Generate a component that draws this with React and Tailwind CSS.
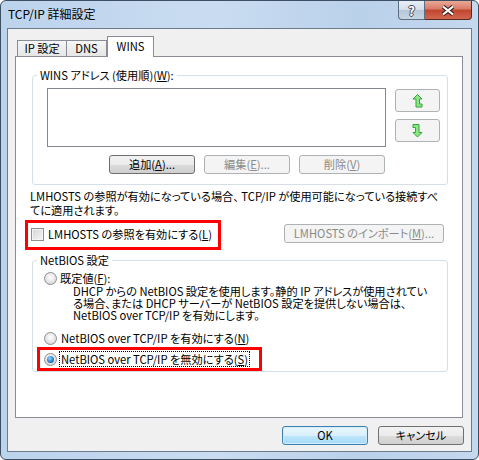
function Btn({ children, disabled, primary, className = "" }) {
  let look =
    "border-[#707070] bg-[linear-gradient(#f2f2f2,#ebebeb_50%,#dddddd_50%,#cfcfcf)] text-black";
  if (disabled) look = "border-[#adb2b5] bg-[#f4f4f4] text-[#8a8a8a]";
  if (primary)
    look =
      "border-[#3c7fb1] bg-[linear-gradient(#eaf6fd,#d9f0fc_50%,#bee6fd_50%,#a7d9f5)] text-black shadow-[inset_0_0_0_1px_#d2eefd]";
  return (
    <div
      className={`flex items-center justify-center h-[19px] border rounded-[3px] leading-none ${look} ${className}`}
    >
      {children}
    </div>
  );
}

function Radio({ checked }) {
  return (
    <span className="w-[13px] h-[13px] shrink-0 rounded-full border border-[#8e8f8f] bg-[radial-gradient(circle_at_50%_40%,#ffffff,#e2e2e2_60%,#c8c8c8)] flex items-center justify-center">
      {checked && (
        <span className="w-[7px] h-[7px] rounded-full bg-[radial-gradient(circle_at_40%_35%,#9ad6ff,#2a7fcc_55%,#0c427f)]" />
      )}
    </span>
  );
}

function ArrowUp() {
  return (
    <svg width="11" height="14" viewBox="0 0 11 14">
      <path
        d="M5.5 0.5 L10 5 L7.5 5 L7.5 10 L10 10 L10 13 L4 13 L4 5 L1 5 Z"
        fill="#8be886"
        stroke="#38a23e"
        strokeWidth="1"
        strokeLinejoin="miter"
      />
    </svg>
  );
}

function ArrowDown() {
  return (
    <svg width="11" height="14" viewBox="0 0 11 14">
      <path
        d="M1 0.5 L7 0.5 L7 8.5 L10 8.5 L5.5 13 L1 8.5 L3.5 8.5 L3.5 3.5 L1 3.5 Z"
        fill="#8be886"
        stroke="#38a23e"
        strokeWidth="1"
      />
    </svg>
  );
}

function App() {
  return (
    <div className="w-[479px] h-[460px] font-['Noto_Sans_CJK_JP',sans-serif] text-[11.2px] [font-feature-settings:'palt'] text-black">
      <div className="w-full h-full flex flex-col border border-[#3e4f63] rounded-[6px] bg-[linear-gradient(to_right,#bcd3ec,#c9dcf1_45%,#bad1ea_75%,#c4d8ee)] overflow-hidden">
        {/* title bar */}
        <div className="h-[27px] flex justify-between shrink-0">
          <div className="pl-[7px] pt-[5px] leading-[16px] text-[12px]">TCP/IP 詳細設定</div>
          <div className="flex pr-[6px] h-[19px]">
            <div className="w-[27px] h-full flex items-center justify-center border border-t-0 border-[#5d6d80] rounded-bl-[4px] bg-[linear-gradient(#e8eef6,#d3deea_50%,#b7c7d9_50%,#c7d5e4)]">
              <span className="text-white font-bold text-[13px] leading-none [text-shadow:1px_0_0_#3b4756,-1px_0_0_#3b4756,0_1px_0_#3b4756,0_-1px_0_#3b4756]">
                ?
              </span>
            </div>
            <div className="w-[47px] h-full flex items-center justify-center border border-t-0 border-l-0 border-[#5a2a22] rounded-br-[4px] bg-[linear-gradient(#e8a897,#d77b65_45%,#c2452e_50%,#d06650)]">
              <svg width="14" height="11" viewBox="0 0 14 11">
                <path d="M2 1.5 L12 9.5 M12 1.5 L2 9.5" stroke="#3b2521" strokeWidth="4.2" />
                <path d="M2 1.5 L12 9.5 M12 1.5 L2 9.5" stroke="#ffffff" strokeWidth="2.2" />
              </svg>
            </div>
          </div>
        </div>

        {/* client area */}
        <div className="flex-1 mx-[6px] mb-[7px] border border-[#6c7c8e] bg-[#f0f0f0] pl-[7px] pt-[7px]">
          {/* tabs */}
          <div className="flex items-end h-[20px] pl-[2px]">
            <div className="w-[50px] h-[16px] border border-b-0 border-[#898c95] bg-[linear-gradient(#f5f5f5,#e6e6e6)] flex items-center justify-center leading-none">
              IP 設定
            </div>
            <div className="w-[41px] h-[16px] -ml-px border border-b-0 border-[#898c95] bg-[linear-gradient(#f5f5f5,#e6e6e6)] flex items-center justify-center leading-none">
              DNS
            </div>
            <div className="relative z-10 w-[47px] h-[21px] -mb-px border border-b-0 border-[#898c95] bg-white flex items-center justify-center leading-none pb-[1px]">
              WINS
            </div>
          </div>

          {/* tab panel */}
          <div className="w-[448px] h-[362px] border border-[#898c95] bg-white">
            <fieldset className="ml-[16px] mt-[10px] w-[416px] border border-[#d5dfe5] rounded-[3px] pb-[10px]">
              <legend className="ml-[4px] px-[3px] leading-[16px]">
                WINS アドレス (使用順)(<u>W</u>):
              </legend>
              <div className="flex mt-[5px] ml-[14px]">
                <div className="w-[339px] h-[59px] border border-[#828790] bg-white" />
                <div className="ml-[9px] mt-[1px] flex flex-col gap-[7px]">
                  <div className="w-[45px] h-[23px] border border-[#adb2b5] rounded-[3px] bg-[#f4f4f4] flex items-center justify-center">
                    <ArrowUp />
                  </div>
                  <div className="w-[45px] h-[23px] border border-[#adb2b5] rounded-[3px] bg-[#f4f4f4] flex items-center justify-center">
                    <ArrowDown />
                  </div>
                </div>
              </div>
              <div className="flex mt-[8px] ml-[76px] gap-[9px]">
                <Btn className="w-[86px]">
                  追加(<u>A</u>)...
                </Btn>
                <Btn disabled className="w-[86px]">
                  編集(<u>E</u>)...
                </Btn>
                <Btn disabled className="w-[86px]">
                  削除(<u>V</u>)
                </Btn>
              </div>
            </fieldset>

            <p className="ml-[14px] mt-[4px] leading-[14px] whitespace-nowrap">
              LMHOSTS の参照が有効になっている場合、 TCP/IP が使用可能になっている接続すべ
              <br />
              てに適用されます。
            </p>

            <div className="flex items-start mt-[3px]">
              <div className="ml-[9px] w-[196px] h-[30px] border-[3px] border-[#ff0000] flex items-center pl-[3px] pb-[2px]">
                <span className="w-[13px] h-[13px] shrink-0 border border-[#8e8f8f] bg-[linear-gradient(135deg,#d6d6d6,#f6f6f6)] shadow-[inset_0_0_0_1px_#f4f4f4]" />
                <span className="ml-[4px] leading-[14px] whitespace-nowrap">
                  LMHOSTS の参照を有効にする(<u>L</u>)
                </span>
              </div>
              <Btn disabled className="ml-auto mr-[18px] mt-[4px] w-[160px]">
                LMHOSTS のインポート(<u>M</u>)...
              </Btn>
            </div>

            <fieldset className="ml-[16px] mt-[2px] w-[416px] border border-[#d5dfe5] rounded-[3px]">
              <legend className="ml-[4px] px-[3px] leading-[16px]">NetBIOS 設定</legend>
              <div className="mt-[3px] ml-[11px] flex items-center h-[14px]">
                <Radio />
                <span className="ml-[3px] leading-[14px]">
                  既定値(<u>F</u>):
                </span>
              </div>
              <div className="ml-[40px] leading-[12px] whitespace-nowrap">
                DHCP からの NetBIOS 設定を使用します。静的 IP アドレスが使用されてい
                <br />
                る場合、または DHCP サーバーが NetBIOS 設定を提供しない場合は、
                <br />
                NetBIOS over TCP/IP を有効にします。
              </div>
              <div className="mt-[10px] ml-[11px] flex items-center h-[14px]">
                <Radio />
                <span className="ml-[4px] leading-[14px] whitespace-nowrap">
                  NetBIOS over TCP/IP を有効にする(<u>N</u>)
                </span>
              </div>
              <div className="mt-[2px] ml-[4px] w-[225px] h-[24px] border-[3px] border-[#ff0000] flex items-center pl-[4px]">
                <Radio checked />
                <span className="ml-[2px] h-[16px] border border-dotted border-black px-[1px] leading-[14px] whitespace-nowrap">
                  NetBIOS over TCP/IP を無効にする(<u>S</u>)
                </span>
              </div>
            </fieldset>
          </div>

          {/* dialog buttons */}
          <div className="flex justify-end gap-[10px] pr-[7px] mt-[8px]">
            <Btn primary className="w-[86px]">
              OK
            </Btn>
            <Btn className="w-[86px]">キャンセル</Btn>
          </div>
        </div>
      </div>
    </div>
  );
}

export default App;
